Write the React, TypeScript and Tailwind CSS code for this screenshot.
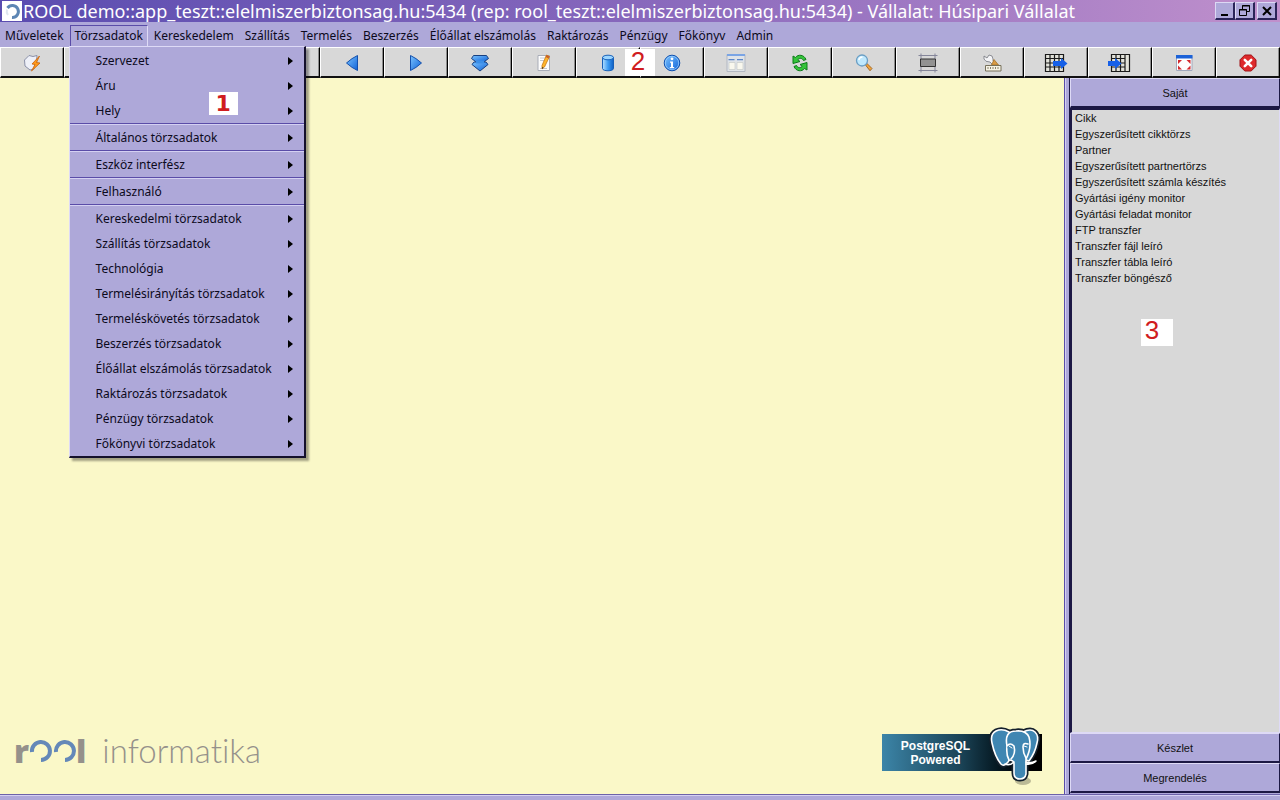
import React from 'react';
import clsx from 'clsx';

const menus = [
  'Műveletek', 'Törzsadatok', 'Kereskedelem', 'Szállítás', 'Termelés', 'Beszerzés',
  'Élőállat elszámolás', 'Raktározás', 'Pénzügy', 'Főkönyv', 'Admin',
];

const menuGroups = [
  ['Szervezet', 'Áru', 'Hely'],
  ['Általános törzsadatok'],
  ['Eszköz interfész'],
  ['Felhasználó'],
  [
    'Kereskedelmi törzsadatok', 'Szállítás törzsadatok', 'Technológia', 'Termelésirányítás törzsadatok',
    'Termeléskövetés törzsadatok', 'Beszerzés törzsadatok', 'Élőállat elszámolás törzsadatok',
    'Raktározás törzsadatok', 'Pénzügy törzsadatok', 'Főkönyvi törzsadatok',
  ],
];

const favourites = [
  'Cikk', 'Egyszerűsített cikktörzs', 'Partner', 'Egyszerűsített partnertörzs',
  'Egyszerűsített számla készítés', 'Gyártási igény monitor', 'Gyártási feladat monitor',
  'FTP transzfer', 'Transzfer fájl leíró', 'Transzfer tábla leíró', 'Transzfer böngésző',
];

const tools: { label: string; icon: React.ReactNode }[] = [
  {
    label: 'Végrehajtás',
    icon: (
      <>
        <path d="M7 2.5 L11 3.5 L15 2.5 L14.500 8 L12 16 L8 17 L3 13 L2.500 7 Z" fill="#eef0f8" stroke="#8a90a8" />
        <path d="M17.500 3 L10 11 L13 11.500 L9.500 18 L18 10 L14.500 9.500 Z" fill="#ff9a1a" stroke="#c8600c" strokeWidth=".8" />
      </>
    ),
  },
  { label: 'Új', icon: <path d="M5 2h8l3 3v13H5z" fill="#fff" stroke="#666" /> },
  { label: 'Mentés', icon: <path d="M3 3h14v14H3z" fill="#4d8fe0" stroke="#1b4a9a" /> },
  { label: 'Törlés', icon: <path d="M4 4l12 12M16 4L4 16" stroke="#c22" strokeWidth="2" /> },
  { label: 'Első', icon: <path d="M2 3h16l-8 7zM2 10h16l-8 7z" fill="#2f86e8" stroke="#14408c" /> },
  { label: 'Előző', icon: <path d="M15.500 2.500 V17.500 Q10 15 4.500 10 Q10 5 15.500 2.500 Z" fill="url(#blue)" stroke="#1450ac" /> },
  { label: 'Következő', icon: <path d="M4.500 2.500 V17.500 Q10 15 15.500 10 Q10 5 4.500 2.500 Z" fill="url(#blue)" stroke="#1450ac" /> },
  {
    label: 'Utolsó',
    icon: (
      <>
        <path d="M4 9 H16 L18 11.500 L10 18 L2 11.500 Z" fill="url(#blue)" stroke="#173f80" />
        <path d="M3.500 2.500 H16.500 L18.500 5.500 L14.500 8.500 H5.500 L1.500 5.500 Z" fill="url(#blue)" stroke="#173f80" />
        <path d="M6 7.500h8v3H6z" fill="#3c8fe8" />
      </>
    ),
  },
  {
    label: 'Szerkesztés',
    icon: (
      <>
        <path d="M4 2.500h11.500v15H4z" fill="#fdfdfd" stroke="#a9adb8" />
        <path d="M6 5h7M6 7.500h5M6 15.500h7" stroke="#c4c8d0" />
        <path d="M12.500 2 L15.500 3.500 L10.500 14 L8 16 L8 12.500 Z" fill="#ffb52c" stroke="#c77914" strokeWidth=".8" />
        <path d="M12.500 2l3 1.500-1 2-2.800-1.500z" fill="#c65e2b" />
        <path d="M8 14l1.500.8L8 16z" fill="#333" />
      </>
    ),
  },
  {
    label: 'Adatbázis',
    icon: (
      <>
        <path d="M4.500 4.500v11c0 3 11 3 11 0v-11z" fill="url(#cyl)" stroke="#1760b8" />
        <ellipse cx="10" cy="4.500" rx="5.500" ry="2.300" fill="#9bd5ff" stroke="#1760b8" />
      </>
    ),
  },
  {
    label: 'Információ',
    icon: (
      <>
        <circle cx="10" cy="10" r="7.800" fill="url(#blue)" stroke="#0e4fae" />
        <circle cx="10" cy="10" r="6.700" fill="none" stroke="#a5d6ff" strokeWidth=".7" />
        <circle cx="10" cy="5.800" r="1.400" fill="#fff" />
        <path d="M8 8.500h3v5.500h1.200v1.200H7.800V14H9V9.700H8z" fill="#fff" />
      </>
    ),
  },
  {
    label: 'Ablakok',
    icon: (
      <>
        <path d="M1 1.500h18v17H1z" fill="#dfe3e8" stroke="#b3b8c2" />
        <path d="M1 1h18v2H1z" fill="#7aa4e4" />
        <path d="M2.500 6h6v1.200h-6zM11 6h6v1.200h-6z" fill="#5c87c8" />
        <path d="M3 9.500h6v7H3zM11 9.500h6v7h-6z" fill="#f9f8ee" stroke="#c9cbc8" strokeWidth=".7" />
      </>
    ),
  },
  {
    label: 'Frissítés',
    icon: (
      <>
        <path d="M16 6.500 C14 1.500 8 1 5.500 4.500 L3 3 L3 10.500 L10 8.500 L7.800 6.700 C10 4.600 12 5 13.500 7.500 Z" fill="#35c43a" stroke="#0c7a19" />
        <path d="M4 13.500 C6 18.500 12 19 14.500 15.500 L17 17 L17 9.500 L10 11.500 L12.200 13.300 C10 15.400 8 15 6.500 12.500 Z" fill="#35c43a" stroke="#0c7a19" />
      </>
    ),
  },
  {
    label: 'Keresés',
    icon: (
      <>
        <path d="M11.500 12 L13 10.500 L18 15.500 L16 17.800 Z" fill="#f2a33c" stroke="#8f5512" strokeWidth=".8" />
        <circle cx="8" cy="7.500" r="5.500" fill="#bfe8fd" stroke="#6a9ec4" strokeWidth="1.300" />
        <path d="M4.800 7 Q5.500 4 8.500 4" fill="none" stroke="#fff" strokeWidth="1.400" />
      </>
    ),
  },
  {
    label: 'Keret',
    icon: (
      <>
        <path d="M3 0.500v19M17 0.500v19M0.500 2.500h19M0.500 17.500h19" stroke="#85869a" />
        <path d="M2.500 6h15v7.500h-15z" fill="#929292" stroke="#333" />
      </>
    ),
  },
  {
    label: 'Beállítások',
    icon: (
      <>
        <path d="M2 3 L5 5 L7 2 Q11 2 11 6 L11 8 L14 11 L12 13 L8 9 Q3 9 2 6 Z" fill="#f4f4f6" stroke="#74767e" strokeWidth=".8" />
        <path d="M12 6.500 L16.500 12 H9.500 Z" fill="#d99b45" stroke="#9b6a24" strokeWidth=".7" />
        <path d="M3.500 12.500h15.500v5.500H3.500z" fill="#f5f2e4" stroke="#77705a" />
        <path d="M6 14v2M8.500 14v2M11 14v2M13.500 14v2M16 14v2" stroke="#8a8470" />
      </>
    ),
  },
  {
    label: 'Exportálás',
    icon: (
      <>
        <path d="M-.5 1.500h18v17h-18z" fill="#e2e2da" />
        <path d="M-.5 1.500h18v17h-18zM4 1v18M8.500 1v18M13 1v18M-1 5.500h19M-1 10h19M-1 14h19" fill="none" stroke="#1a1a1a" strokeWidth="1.200" />
        <path d="M7 8h8V5l6.500 5.500L15 16v-3H7z" fill="#1660e8" />
      </>
    ),
  },
  {
    label: 'Importálás',
    icon: (
      <>
        <path d="M1.500 1.500h18v17h-18z" fill="#e2e2da" />
        <path d="M1.500 1.500h18v17h-18zM6 1v18M10.500 1v18M15 1v18M1 5.500h14M1 10h14M1 14h14" fill="none" stroke="#1a1a1a" strokeWidth="1.200" />
        <path d="M-2 8h7V5l6.500 5.500L5 16v-3h-7z" fill="#1660e8" />
      </>
    ),
  },
  {
    label: 'Teljes képernyő',
    icon: (
      <>
        <path d="M2.500 2.500h15.500v15H2.500z" fill="#fdfdfd" stroke="#a0a8bc" />
        <path d="M2 2h16.500v3.500H2z" fill="#1c62d8" />
        <path d="M4 7h4L4 11zM16.500 7h-4l4 4zM4 16.500h4l-4-4zM16.500 16.500h-4l4-4z" fill="#d3272c" />
      </>
    ),
  },
  {
    label: 'Kilépés',
    icon: (
      <>
        <path d="M6.800 2h6.400L18 6.800v6.400L13.200 18H6.800L2 13.200V6.800z" fill="#de2a2c" stroke="#a01216" />
        <path d="M6.800 6.800l6.400 6.400M13.200 6.800l-6.400 6.400" stroke="#fff" strokeWidth="2.600" strokeLinecap="round" />
      </>
    ),
  },
];

function Gradients() {
  return (
    <svg width="0" height="0" className="absolute" aria-hidden="true">
      <defs>
        <linearGradient id="blue" x1="0" y1="0" x2="1" y2="1">
          <stop offset="0" stopColor="#7cc4ff" />
          <stop offset="1" stopColor="#0f62d8" />
        </linearGradient>
        <linearGradient id="cyl" x1="0" y1="0" x2="1" y2="0">
          <stop offset="0" stopColor="#b5e0ff" />
          <stop offset=".5" stopColor="#3c9cf4" />
          <stop offset="1" stopColor="#0f5fc4" />
        </linearGradient>
      </defs>
    </svg>
  );
}

function Marker({ children, className }: { children: string; className: string }) {
  return (
    <span className={clsx('absolute flex justify-center bg-white text-[#d01c20]', className)}>{children}</span>
  );
}

function TitleBar() {
  const button =
    'flex h-[18px] w-5 items-center justify-center border-t border-l border-r-2 border-b-2 border-t-[#dcd8f4] border-l-[#dcd8f4] border-r-[#2a2458] border-b-[#2a2458] bg-[#aea8d9]';
  return (
    <header className="flex h-[22px] items-center bg-linear-to-r from-[#5a4cb0] via-[#8868bc] to-[#c090cc] pr-[3px] pl-[2px] text-white">
      <svg width="20" height="20" viewBox="0 0 20 20" className="bg-white">
        <path d="M5.500 7 A6 6 0 1 1 10 16.500" fill="none" stroke="#5d86b4" strokeWidth="3" />
        <path d="M5 8.500 A6 6 0 0 0 6 14" fill="none" stroke="#dfe6ef" strokeWidth="2" />
      </svg>
      <h1 className="min-w-0 flex-1 pl-px font-['Noto_Sans',sans-serif] text-[18px] leading-[22px] whitespace-nowrap">
        ROOL demo::app_teszt::elelmiszerbiztonsag.hu:5434 (rep: rool_teszt::elelmiszerbiztonsag.hu:5434) - Vállalat: Húsipari Vállalat
      </h1>
      <button className={button} aria-label="Kis méret">
        <svg width="14" height="14" viewBox="0 0 14 14"><path d="M3 11h7" stroke="#000" strokeWidth="2" /></svg>
      </button>
      <button className={button} aria-label="Előző méret">
        <svg width="14" height="14" viewBox="0 0 14 14" fill="none" stroke="#000">
          <path d="M4.500 5V1.500h7v6H9M4 2h8" />
          <path d="M1.500 5.500h7v6h-7zM1 6h8" />
        </svg>
      </button>
      <button className={clsx(button, 'ml-[2px]')} aria-label="Bezárás">
        <svg width="14" height="14" viewBox="0 0 14 14"><path d="M3 3l8 8M11 3l-8 8" stroke="#000" strokeWidth="2" /></svg>
      </button>
    </header>
  );
}

function DropDown() {
  return (
    <div className="absolute top-5 -left-[2px] z-20 w-[237px] border-t border-r-2 border-b-2 border-l border-t-[#dedaf6] border-r-[#14102c] border-b-[#14102c] border-l-[#dedaf6] bg-[#aea8d9] pt-px shadow-[3px_3px_2px_rgba(0,0,0,0.35)]">
      {menuGroups.map((group, i) => (
        <ul key={i} className={clsx(i > 0 && 'border-t border-[#5a4ca8]')}>
          {group.map((item, j) => (
            <li key={item} className={clsx(i > 0 && j === 0 && 'border-t border-[#d4d0f2]')}>
              <button className="flex h-[25px] w-full items-center justify-between pt-[2px] pr-[11px] pl-[26px]">
                {item}
                <svg width="5" height="8" viewBox="0 0 5 8"><path d="M0 0l5 4-5 4z" /></svg>
              </button>
            </li>
          ))}
        </ul>
      ))}
      <Marker className="top-[45px] left-[139px] h-[23px] w-[29px] font-['DejaVu_Sans',sans-serif] text-[22px] leading-[23px] font-bold">1</Marker>
    </div>
  );
}

function MenuBar() {
  return (
    <nav className="flex h-[25px] items-center gap-px pt-[2px]">
      {menus.map((name) =>
        name === 'Törzsadatok' ? (
          <div key={name} className="relative h-[22px] border border-t-[#5a4ca8] border-r-[#dedaf6] border-b-[#dedaf6] border-l-[#5a4ca8]">
            <button className="h-5 px-1">{name}</button>
            <DropDown />
          </div>
        ) : (
          <button key={name} className="h-5 px-[5px]">{name}</button>
        ),
      )}
    </nav>
  );
}

function Toolbar() {
  return (
    <div className="relative grid grid-cols-20 bg-black">
      {tools.map((tool) => (
        <button
          key={tool.label}
          aria-label={tool.label}
          className="flex h-[31px] items-center justify-center border-t border-r border-b-2 border-l border-t-white border-r-black border-b-[#111] border-l-white bg-[#d8d8d8] pt-px shadow-[inset_-1px_0_0_#8c8c8c]"
        >
          <svg width="20" height="20" viewBox="0 0 20 20" className="overflow-visible">{tool.icon}</svg>
        </button>
      ))}
      <Marker className="top-[2px] left-[625px] h-[27px] w-[30px] pr-1 font-['Liberation_Sans',sans-serif] text-[26px] leading-6">2</Marker>
    </div>
  );
}

function RoolLogo() {
  return (
    <div className="flex items-baseline text-[#95918b]">
      <span className="font-['Open_Sans',sans-serif] text-[32px] leading-10 font-extrabold">r</span>
      <svg width="47" height="24" viewBox="0 0 47 24" fill="none" stroke="#6488b8" strokeWidth="4" className="-mb-1">
        <path d="M3 13 A9 9 0 1 1 12 21" />
        <path d="M27 13 A9 9 0 1 1 36 21" />
      </svg>
      <span className="font-['Open_Sans',sans-serif] text-[32px] leading-10 font-extrabold">l</span>
      <span className="pl-4 font-['Lato',sans-serif] text-[33px] leading-10 font-light [font-variant-ligatures:none]">informatika</span>
    </div>
  );
}

const elephant = {
  leftEar: 'M23 6 Q16 2 10 5 Q4 8 6 17 Q9 31 15 38 Q18 41 22 36 L24 33',
  rightEar: 'M37 6 Q45 2 49 6 Q53 10 51 17 Q49 27 43 35 L40 34',
  head: 'M21 20 Q18 5 30 5 Q40 4 43 11 Q46 22 40 33 L40 48 Q39 53 34 53 Q28 53 28 47 L28 38 Q28 34 23 34 Q20 29 21 20 Z',
};

function PostgresBadge() {
  return (
    <div className="relative h-[37px] w-40 bg-linear-to-r from-[#3c85a8] via-[#1a4255] to-black pt-[5px] pl-4 text-center font-['Liberation_Sans',sans-serif] text-[12px] leading-[14px] font-bold text-white">
      <p className="w-[75px]">PostgreSQL Powered</p>
      <svg width="56" height="62" viewBox="0 0 56 62" className="absolute -top-2 right-0" strokeLinejoin="round" strokeLinecap="round">
        <ellipse cx="37" cy="55" rx="8" ry="4" fill="#000" opacity=".25" />
        <g fill="#14202c" stroke="#14202c" strokeWidth="5">
          <path d={elephant.leftEar} />
          <path d={elephant.rightEar} />
          <path d={elephant.head} />
        </g>
        <g fill="#3f86b2" stroke="#fff" strokeWidth="1.600">
          <path d={elephant.leftEar} />
          <path d={elephant.rightEar} />
          <path d={elephant.head} />
          <path d="M21 20 Q24 16 28 20 Q30 28 25 33" />
          <path d="M42 18 Q37 16 37 21 Q37 27 40 32" fill="none" />
          <path d="M28 36 Q24 40 19 38 M40 36 Q44 38 50 35 Q46 39 40 38" fill="none" />
        </g>
        <path d="M23 20l3 2M38 20l3 1" stroke="#fff" />
      </svg>
    </div>
  );
}

function Sidebar() {
  const head =
    'h-[30px] w-full border-t border-r border-b-2 border-l border-t-[#dedaf6] border-r-[#1c1844] border-b-[#1c1844] border-l-[#dedaf6] bg-[#aea8d9]';
  return (
    <aside className="flex w-[211px] flex-col border-l border-[#1c1844] pb-px font-['Liberation_Sans',sans-serif] text-[11px] leading-4 text-[#111]">
      <button className={head}>Saját</button>
      <ul className="relative flex-1 border-t-2 border-r border-b border-l-2 border-t-[#1c1844] border-r-[#dedaf6] border-b-[#dedaf6] border-l-[#1c1844] bg-[#d8d8d8] pl-[3px]">
        {favourites.map((f) => (
          <li key={f}><a href="#" className="block">{f}</a></li>
        ))}
        <Marker className="top-[209px] left-[69px] h-[27px] w-8 pr-[10px] font-['Liberation_Sans',sans-serif] text-[26px] leading-[22px]">3</Marker>
      </ul>
      <button className={head}>Készlet</button>
      <button className={head}>Megrendelés</button>
    </aside>
  );
}

export default function App() {
  return (
    <div className="flex min-h-screen flex-col bg-[#aea8d9] font-['Noto_Sans',sans-serif] text-[12px] text-[#0c0a1c]">
      <Gradients />
      <TitleBar />
      <MenuBar />
      <Toolbar />
      <div className="flex flex-1">
        <main className="flex flex-1 items-end justify-between bg-[#faf8c8] pr-[22px] pb-[23px] pl-[14px]">
          <RoolLogo />
          <PostgresBadge />
        </main>
        <div className="w-[5px] border-l border-[#5a4ca8] bg-[#aea8d9] shadow-[inset_1px_0_0_#d4d0f2]" />
        <Sidebar />
      </div>
      <footer className="h-[6px] border-t border-[#6c62a8] shadow-[inset_0_1px_0_#d4d0f2]" />
    </div>
  );
}
